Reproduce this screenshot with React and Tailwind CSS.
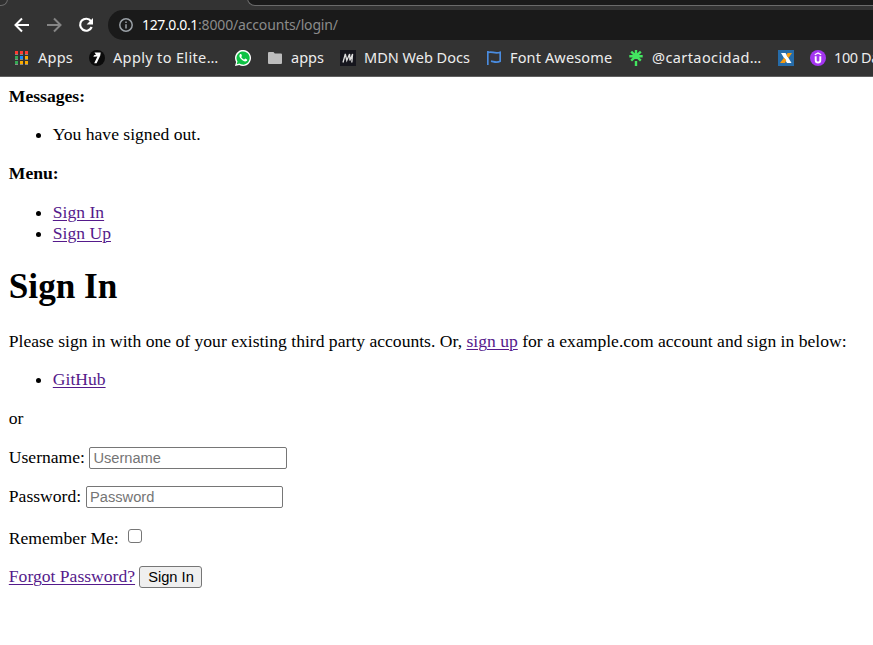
import React from 'react';

const link = 'text-[#551a8b] underline decoration-1 underline-offset-[2px]';

function Bullets({ children }) {
  return <ul className="mb-[17.6px] list-disc pl-[44px]">{children}</ul>;
}

function AppsGrid() {
  const colors = ['#ff3b30', '#ff3b30', '#ff3b30', '#34a853', '#1a8cff', '#fbab00', '#34a853', '#fbab00', '#fbab00'];
  return (
    <svg className="h-[14px] w-[14px] shrink-0" viewBox="0 0 14 14" shapeRendering="crispEdges">
      {colors.map((c, i) => (
        <g key={i}>
          <rect x={(i % 3) * 5} y={Math.floor(i / 3) * 5} width="3" height="3" fill={c} />
          <rect x={(i % 3) * 5} y={Math.floor(i / 3) * 5 + 3} width="3" height="1" fill="#888" />
        </g>
      ))}
    </svg>
  );
}

function Chrome() {
  return (
    <header className="flex h-[77px] flex-col overflow-hidden border-b border-[#5f5f5f] bg-[#333333] font-['Noto_Sans',sans-serif]">
      <div className="flex h-[6px] shrink-0 items-end justify-between">
        <div className="h-[18px] w-[8px] rounded-br-[7px] border-r border-b border-[#6a6a6a] bg-[#303030]" />
        <div className="h-[18px] w-[626px] rounded-bl-[8px] border-b border-l border-[#6a6a6a] bg-[#1a1a1a]" />
      </div>
      <div className="mt-[4px] flex h-[30px] shrink-0 items-center">
        <svg className="ml-[13px] h-[18px] w-[18px]" viewBox="0 0 18 18" fill="none" stroke="#fff" strokeWidth="2">
          <path d="M16 9H3M9 2.5L2.5 9L9 15.5" />
        </svg>
        <svg className="ml-[14px] h-[18px] w-[18px]" viewBox="0 0 18 18" fill="none" stroke="#858585" strokeWidth="2">
          <path d="M2 9h13M9 2.5L15.5 9L9 15.5" />
        </svg>
        <svg className="ml-[14px] h-[18px] w-[18px]" viewBox="0 0 18 18" fill="none" stroke="#fff" strokeWidth="2.2">
          <path d="M14 5.2A6 6 0 1 0 14.7 11" />
          <path d="M16 2v6.4H9.6z" fill="#fff" stroke="none" />
        </svg>
        <div className="ml-[13px] flex h-[30px] flex-1 items-center rounded-l-full bg-[#1a1a1a] pl-[11px]">
          <svg className="h-[14px] w-[14px]" viewBox="0 0 14 14" fill="none" stroke="#9aa0a6" strokeWidth="1.5">
            <circle cx="7" cy="7" r="6.2" />
            <path d="M7 6.2v4.2M7 3.4v1.6" />
          </svg>
          <span className="mb-[2px] ml-[9px] w-[56px] text-[14px] tracking-[-0.38px] whitespace-nowrap text-white">127.0.0.1</span>
          <span className="mb-[2px] text-[14px] tracking-[-0.16px] whitespace-nowrap text-[#8b8b8b]">:8000/accounts/login/</span>
        </div>
      </div>
      <nav className="flex h-[36px] shrink-0 items-center pl-[15px] text-[14.5px] leading-[20px] whitespace-nowrap text-[#ededed]">
        <AppsGrid />
        <span className="mb-[2px] ml-[9px] w-[51px] shrink-0 tracking-[0.25px]">Apps</span>
        <svg className="h-[16px] w-[16px] shrink-0" viewBox="0 0 16 16">
          <circle cx="8" cy="8" r="8" fill="#0b0b0b" />
          <path d="M5.5 2.5h6.2l-.5 3.2-3.6 7.6H5.2L8.4 6.4l-4 .4.6-1.6 2-.4z" fill="#fff" />
        </svg>
        <span className="mb-[2px] ml-[8px] w-[122px] shrink-0 tracking-[0.35px]">Apply to Elite…</span>
        <svg className="h-[16px] w-[16px] shrink-0" viewBox="0 0 16 16">
          <path d="M0 16l1.1-4A8 8 0 1 1 4.2 15z" fill="#fff" />
          <path d="M1.7 14.3l.8-2.7a6.6 6.6 0 1 1 2 2z" fill="#0ec244" />
          <path d="M5.2 3.9c-1.5 1.1-.9 3.2.9 5.1 1.8 2 4 3 5.4 2.1.9-.6.8-1.5.5-1.7l-1.6-.8c-.5-.2-.7.9-1.2.9-.8 0-2.9-2-2.9-2.6 0-.4.8-.7.6-1.2l-.7-1.6z" fill="#fff" />
        </svg>
        <svg className="ml-[17px] h-[12px] w-[14px] shrink-0" viewBox="0 0 14 12">
          <path d="M1 0h4.5l1.3 1.5H13a1 1 0 0 1 1 1V11a1 1 0 0 1-1 1H1a1 1 0 0 1-1-1V1a1 1 0 0 1 1-1z" fill="#bdbdbd" />
        </svg>
        <span className="mb-[2px] ml-[9px] w-[49px] shrink-0">apps</span>
        <svg className="h-[16px] w-[16px] shrink-0" viewBox="0 0 16 16">
          <path d="M0 0h16v16H0z" fill="#15151d" />
          <path d="M3 12.5L5.3 4l1.5 6.5L9.6 4l.3 6.5L12.6 4l-.8 8.5" fill="none" stroke="#ddd" strokeWidth="1.3" />
        </svg>
        <span className="mb-[2px] ml-[8px] w-[123px] shrink-0">MDN Web Docs</span>
        <svg className="h-[14px] w-[14px] shrink-0" viewBox="0 0 14 14" fill="none" stroke="#4a8ce0" strokeWidth="1.7">
          <path d="M.8 0v14M1 1.6c4-2 6 1.8 12.2-.3v9c-3.6 1.8-5.4.6-9.2-.2" />
        </svg>
        <span className="mb-[2px] ml-[9px] w-[119px] shrink-0 tracking-[0.14px]">Font Awesome</span>
        <svg className="h-[16px] w-[14px] shrink-0" viewBox="0 0 14 16" fill="none" stroke="#43e660" strokeWidth="2.4">
          <path d="M7 0v9M7 11v5M.3 6.3h13.4M2.2 1.7l9.6 9M11.8 1.7l-9.6 9" />
        </svg>
        <span className="mb-[2px] ml-[9px] w-[126px] shrink-0 tracking-[0.4px]">@cartaocidad…</span>
        <svg className="h-[16px] w-[16px] shrink-0" viewBox="0 0 16 16">
          <path d="M0 0h16v16H0z" fill="#266ca9" />
          <path d="M3 3h4.5l6 10H9z" fill="#fff" />
          <path d="M9.5 3H14l-3.5 5-2-2.5zM2 13l4-5.3L8.3 10 7 13z" fill="#f59b12" />
        </svg>
        <svg className="ml-[16px] h-[16px] w-[16px] shrink-0" viewBox="0 0 16 16" fill="none" stroke="#fff">
          <circle cx="8" cy="8" r="8" fill="#a435f0" stroke="none" />
          <path d="M4.8 4.8L8 3l3.2 1.8" strokeWidth="1.3" />
          <path d="M5.7 6.2v4a2.3 2.3 0 0 0 4.6 0v-4" strokeWidth="1.9" />
        </svg>
        <span className="mb-[2px] ml-[8px] shrink-0 tracking-[-0.4px]">100 Days</span>
      </nav>
    </header>
  );
}

const field =
  "h-[22px] rounded-[2px] border border-[#767676] bg-white font-['Liberation_Sans',sans-serif] text-[14.667px] text-black placeholder:text-[#757575]";

export default function App() {
  return (
    <div className="h-[645px] w-[873px] overflow-hidden bg-white">
      <Chrome />
      <main className="px-[8.8px] pt-[8.8px] font-['Liberation_Serif',serif] text-[17.6px] leading-[21px] text-black">
        <div className="mb-[17.6px] font-bold">Messages:</div>
        <Bullets>
          <li>You have signed out.</li>
        </Bullets>
        <div className="mb-[17.6px] font-bold">Menu:</div>
        <Bullets>
          <li><a className={link}>Sign In</a></li>
          <li><a className={link}>Sign Up</a></li>
        </Bullets>
        <h1 className="mt-[23.6px] mb-[23.6px] text-[35.2px] leading-[40px] font-bold">Sign In</h1>
        <p className="mb-[17.6px] whitespace-nowrap">
          Please sign in with one of your existing third party accounts. Or, <a className={link}>sign up</a> for a
          example.com account and sign in below:
        </p>
        <Bullets>
          <li><a className={link}>GitHub</a></li>
        </Bullets>
        <p className="mb-[17.6px]">or</p>
        <form>
          <label className="mb-[17px] flex h-[22px] items-center">
            <span className="w-[80.2px]">Username:</span>
            <input type="text" placeholder="Username" className={`${field} w-[198px] px-[3.4px]`} />
          </label>
          <label className="mb-[20px] flex h-[22px] items-center">
            <span className="w-[77.2px]">Password:</span>
            <input type="password" placeholder="Password" className={`${field} w-[197px] px-[3px]`} />
          </label>
          <label className="mb-[16px] flex h-[22px] items-center">
            <span className="w-[119.2px]">Remember Me:</span>
            <input
              type="checkbox"
              className="mb-[5px] h-[14px] w-[14px] appearance-none rounded-[3px] border border-[#767676] bg-white"
            />
          </label>
          <div className="flex h-[22px] items-center">
            <a className={`${link} w-[130.2px]`}>Forgot Password?</a>
            <button
              type="button"
              className="h-[22px] w-[63px] rounded-[3px] border border-[#767676] bg-[#efefef] pl-px font-['Liberation_Sans',sans-serif] text-[14.667px] leading-[20px]"
            >
              Sign In
            </button>
          </div>
        </form>
      </main>
    </div>
  );
}
